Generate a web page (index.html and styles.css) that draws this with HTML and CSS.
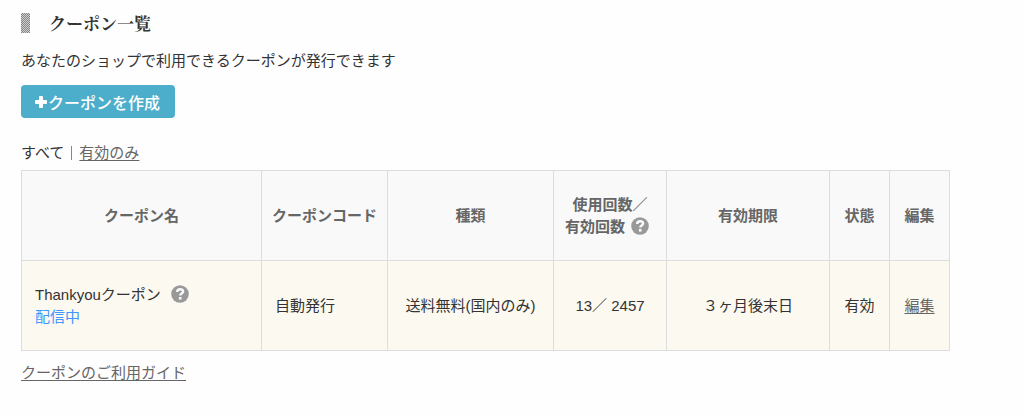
FILE: index.html
```html
<!DOCTYPE html>
<html lang="ja">
<head>
    <meta charset="UTF-8">
    <meta name="viewport" content="width=device-width, initial-scale=1.0">
    <title>クーポン一覧</title>
    <link rel="stylesheet" href="styles.css">
</head>
<body>
    <h1 class="page-title">クーポン一覧</h1>
    <p class="lead">あなたのショップで利用できるクーポンが発行できます</p>
    <button type="button" class="btn-create">
        <svg class="icon-plus" viewBox="0 0 12 12" aria-hidden="true"><path d="M4.9 0h2.2q.9 0 .9.9V4h3.1q.9 0 .9.9v2.2q0 .9-.9.9H8v3.1q0 .9-.9.9H4.9q-.9 0-.9-.9V8H.9Q0 8 0 7.100V4.900Q0 4 .9 4H4V.9Q4 0 4.900 0z"/></svg>
        クーポンを作成
    </button>

    <div class="filter">
        <span>すべて</span>
        <span class="divider"></span>
        <a href="#">有効のみ</a>
    </div>

    <table class="coupon-table">
        <colgroup>
            <col class="col-name">
            <col class="col-code">
            <col class="col-type">
            <col class="col-count">
            <col class="col-limit">
            <col class="col-status">
            <col class="col-edit">
        </colgroup>
        <thead>
            <tr>
                <th>クーポン名</th>
                <th>クーポンコード</th>
                <th>種類</th>
                <th>使用回数／<br>有効回数 <svg class="icon-help icon-help-count" viewBox="0 0 18 18" role="img" aria-label="ヘルプ"><circle cx="9" cy="9" r="8.800"/><path d="M6.100 7C6.200 5 7.400 4.200 9.100 4.200c1.800 0 3 .9 3 2.400 0 2-2.900 2-2.900 4"/><rect x="7.900" y="12" width="2.600" height="2.600"/></svg></th>
                <th>有効期限</th>
                <th>状態</th>
                <th>編集</th>
            </tr>
        </thead>
        <tbody>
            <tr>
                <td class="cell-left">Thankyouクーポン <svg class="icon-help icon-help-name" viewBox="0 0 18 18" role="img" aria-label="ヘルプ"><circle cx="9" cy="9" r="8.800"/><path d="M6.100 7C6.200 5 7.400 4.200 9.100 4.200c1.800 0 3 .9 3 2.400 0 2-2.900 2-2.900 4"/><rect x="7.900" y="12" width="2.600" height="2.600"/></svg><br><span class="delivering">配信中</span></td>
                <td class="cell-left">自動発行</td>
                <td>送料無料(国内のみ)</td>
                <td>13／ 2457</td>
                <td>３ヶ月後末日</td>
                <td>有効</td>
                <td><a href="#">編集</a></td>
            </tr>
        </tbody>
    </table>

    <a class="guide" href="#">クーポンのご利用ガイド</a>
</body>
</html>
```
FILE: styles.css
```css
body {
    margin: 0;
    padding: 11px 74px 20px 21px;
    background-color: #fefefe;
    color: #333;
    font-family: "Liberation Sans", "Noto Sans CJK JP", sans-serif;
    font-size: 15px;
    line-height: 22px;
}
a {
    color: #666;
    text-decoration: underline;
    text-underline-offset: 2px;
}
.page-title {
    display: flex;
    align-items: center;
    gap: 19px;
    margin: 0;
    font-family: "Noto Serif CJK JP", "Noto Sans CJK JP", serif;
    font-size: 17px;
    font-weight: bold;
    line-height: 24px;
}
/* checkered mark before the title */
.page-title::before {
    content: "";
    width: 9px;
    height: 20px;
    background: repeating-conic-gradient(#888 0 25%, #ccc 0 50%) 0 0 / 2px 2px;
}
.lead {
    margin: 15px 0 13px;
}
.btn-create {
    display: flex;
    align-items: center;
    gap: 1px;
    height: 33px;
    padding: 0 15px 0 14px;
    border: none;
    border-radius: 4px;
    background-color: #4daecb;
    color: #fff;
    font-family: inherit;
    font-size: 16px;
    font-weight: 500;
    cursor: pointer;
}
.btn-create:hover {
    background-color: #3d9dba;
}
.icon-plus {
    width: 12px;
    height: 12px;
    fill: #fff;
}
.filter {
    display: flex;
    align-items: center;
    margin: 24px 0 6px;
}
.divider {
    width: 1px;
    height: 14px;
    margin: 0 7px;
    background-color: #888;
}
.coupon-table {
    width: 100%;
    border-collapse: collapse;
    table-layout: fixed;
}
.coupon-table th,
.coupon-table td {
    height: 89px;
    padding: 0;
    border: 1px solid #ddd;
    text-align: center;
    vertical-align: middle;
}
.coupon-table th {
    background-color: #f9f9f9;
    color: #666;
    font-weight: bold;
}
.coupon-table td {
    background-color: #fcf9f0;
}
.coupon-table .cell-left {
    padding-left: 13px;
    text-align: left;
}
.col-name {
    width: 26%;
}
.col-code {
    width: 126px;
}
.col-type {
    width: 18%;
}
.col-count {
    width: 113px;
}
.col-limit {
    width: 163px;
}
.col-status,
.col-edit {
    width: 60px;
}
.icon-help {
    width: 18px;
    height: 18px;
    vertical-align: -3px;
}
.icon-help-count {
    margin: 0 6px 0 2px;
}
.icon-help-name {
    margin-left: 6px;
}
.icon-help circle {
    fill: #999;
}
.icon-help path {
    fill: none;
    stroke: #f9f9f9;
    stroke-width: 2.400;
}
.icon-help rect {
    fill: #f9f9f9;
}
.delivering {
    color: #3f96fb;
}
.guide {
    display: inline-block;
    margin-top: 11px;
}
```
